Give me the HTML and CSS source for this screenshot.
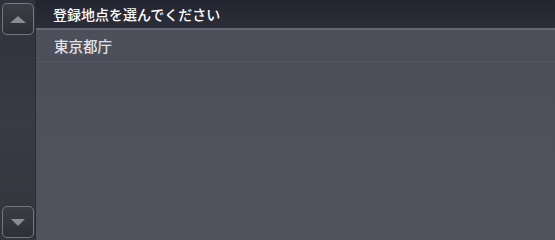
FILE: index.html
```html
<!DOCTYPE html>
<html lang="ja">
<head>
<meta charset="utf-8">
<link rel="stylesheet" href="styles.css">
</head>
<body>
<div class="screen">
  <aside class="side">
    <button class="scroll-btn" type="button" aria-label="上へ">
      <svg width="16" height="7" viewBox="0 0 16 7"><polygon points="8,0 16,7 0,7" fill="#8a8b93"/></svg>
    </button>
    <button class="scroll-btn" type="button" aria-label="下へ">
      <svg width="14" height="7" viewBox="0 0 14 7"><polygon points="0,0 14,0 7,7" fill="#8a8b93"/></svg>
    </button>
  </aside>
  <main class="panel">
    <header class="title">登録地点を選んでください</header>
    <ul class="list">
      <li class="item">東京都庁</li>
    </ul>
  </main>
</div>
</body>
</html>
```
FILE: styles.css
```css
html, body {
  margin: 0;
  padding: 0;
  width: 555px;
  height: 240px;
  overflow: hidden;
  background: #4d4f5a;
}
.screen {
  display: flex;
  width: 555px;
  height: 240px;
  font-family: "Noto Sans CJK JP", "Noto Sans", sans-serif;
}
.side {
  width: 36px;
  flex: none;
  box-sizing: border-box;
  padding: 3px 2px 2px 2px;
  display: flex;
  flex-direction: column;
  justify-content: space-between;
  background: linear-gradient(to bottom, #30313a, #393a43 50%, #33343c);
  box-shadow: inset -1px 0 0 #2a2b31;
}
.scroll-btn {
  width: 32px;
  height: 32px;
  margin: 0;
  padding: 0;
  box-sizing: border-box;
  border: 1.5px solid #76777e;
  border-radius: 5px;
  background: linear-gradient(to bottom, #3b3c44, #2f3037);
  display: flex;
  align-items: center;
  justify-content: center;
}
.panel {
  flex: 1;
  display: flex;
  flex-direction: column;
  background: linear-gradient(to bottom, #4c4e59, #50525d);
}
.title {
  height: 30px;
  flex: none;
  box-sizing: border-box;
  padding-left: 17px;
  display: flex;
  align-items: center;
  color: #ffffff;
  font-size: 14px;
  font-weight: 500;
  background: linear-gradient(to bottom, #22242f, #2b2d39);
  border-bottom: 2px solid #676875;
}
.list {
  list-style: none;
  margin: 0;
  padding: 0;
}
.item {
  height: 31px;
  box-sizing: border-box;
  padding-left: 18px;
  display: flex;
  align-items: center;
  color: #e2e2e6;
  font-size: 14.5px;
  font-weight: 500;
  border-bottom: 1px solid #464853;
  box-shadow: 0 1px 0 #555763;
}
```
